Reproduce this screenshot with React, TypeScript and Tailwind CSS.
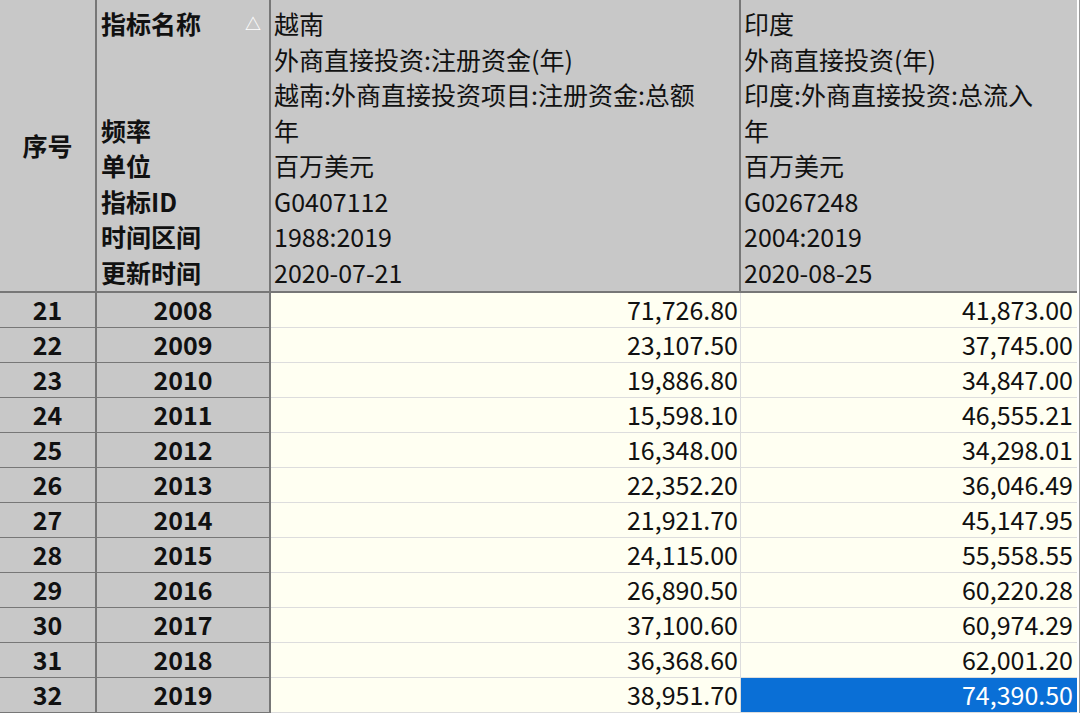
const rows: [number, number, string, string][] = [
  [21, 2008, '71,726.80', '41,873.00'],
  [22, 2009, '23,107.50', '37,745.00'],
  [23, 2010, '19,886.80', '34,847.00'],
  [24, 2011, '15,598.10', '46,555.21'],
  [25, 2012, '16,348.00', '34,298.01'],
  [26, 2013, '22,352.20', '36,046.49'],
  [27, 2014, '21,921.70', '45,147.95'],
  [28, 2015, '24,115.00', '55,558.55'],
  [29, 2016, '26,890.50', '60,220.28'],
  [30, 2017, '37,100.60', '60,974.29'],
  [31, 2018, '36,368.60', '62,001.20'],
  [32, 2019, '38,951.70', '74,390.50'],
];

const font = { fontFamily: '"Noto Sans CJK SC", "Noto Sans", sans-serif' };

export default function App() {
  return (
    <div className="w-[1080px] h-[716px] bg-white overflow-hidden text-[25px] text-[#111]" style={font}>
      <div className="grid grid-cols-[97px_174px_470px_336px] border-r border-[#999]">
        <div className="h-[293px] bg-[#c8c8c8] border-r-2 border-b-2 border-[#777] flex items-center justify-center font-bold">
          序号
        </div>
        <div className="h-[293px] bg-[#c8c8c8] border-r-2 border-b-2 border-[#777] flex flex-col pl-1 font-bold leading-[35.5px] pt-[6px]">
          <div className="flex justify-between pr-2">
            <span>指标名称</span>
            <span className="text-white text-[16px]">△</span>
          </div>
          <div className="h-[71px]" />
          <span>频率</span>
          <span>单位</span>
          <span>指标ID</span>
          <span>时间区间</span>
          <span>更新时间</span>
        </div>
        <div className="h-[293px] bg-[#c8c8c8] border-r-2 border-b-2 border-[#777] flex flex-col pl-[3px] leading-[35.5px] pt-[6px] whitespace-nowrap">
          <span>越南</span>
          <span>外商直接投资:注册资金(年)</span>
          <span>越南:外商直接投资项目:注册资金:总额</span>
          <span>年</span>
          <span>百万美元</span>
          <span>G0407112</span>
          <span>1988:2019</span>
          <span>2020-07-21</span>
        </div>
        <div className="h-[293px] bg-[#c8c8c8] border-b-2 border-[#777] flex flex-col pl-[3px] leading-[35.5px] pt-[6px] whitespace-nowrap">
          <span>印度</span>
          <span>外商直接投资(年)</span>
          <span>印度:外商直接投资:总流入</span>
          <span>年</span>
          <span>百万美元</span>
          <span>G0267248</span>
          <span>2004:2019</span>
          <span>2020-08-25</span>
        </div>
        {rows.map(([n, y, a, b], i) => {
          const last = i === rows.length - 1;
          return [
            <div key={`n${n}`} className="h-[35px] bg-[#c8c8c8] border-r-2 border-b border-[#777] flex items-center justify-center font-bold">
              {n}
            </div>,
            <div key={`y${n}`} className="h-[35px] bg-[#c8c8c8] border-r-2 border-b border-[#777] flex items-center justify-center font-bold">
              {y}
            </div>,
            <div key={`a${n}`} className="h-[35px] bg-[#fffff2] border-r border-b border-[#ddd] flex items-center justify-end pr-[2px]">
              {a}
            </div>,
            <div
              key={`b${n}`}
              className={
                last
                  ? 'h-[35px] bg-[#0a6fd6] text-white border-b border-[#ddd] flex items-center justify-end pr-[4px]'
                  : 'h-[35px] bg-[#fffff2] border-b border-[#ddd] flex items-center justify-end pr-[4px]'
              }
            >
              {b}
            </div>,
          ];
        })}
      </div>
    </div>
  );
}
